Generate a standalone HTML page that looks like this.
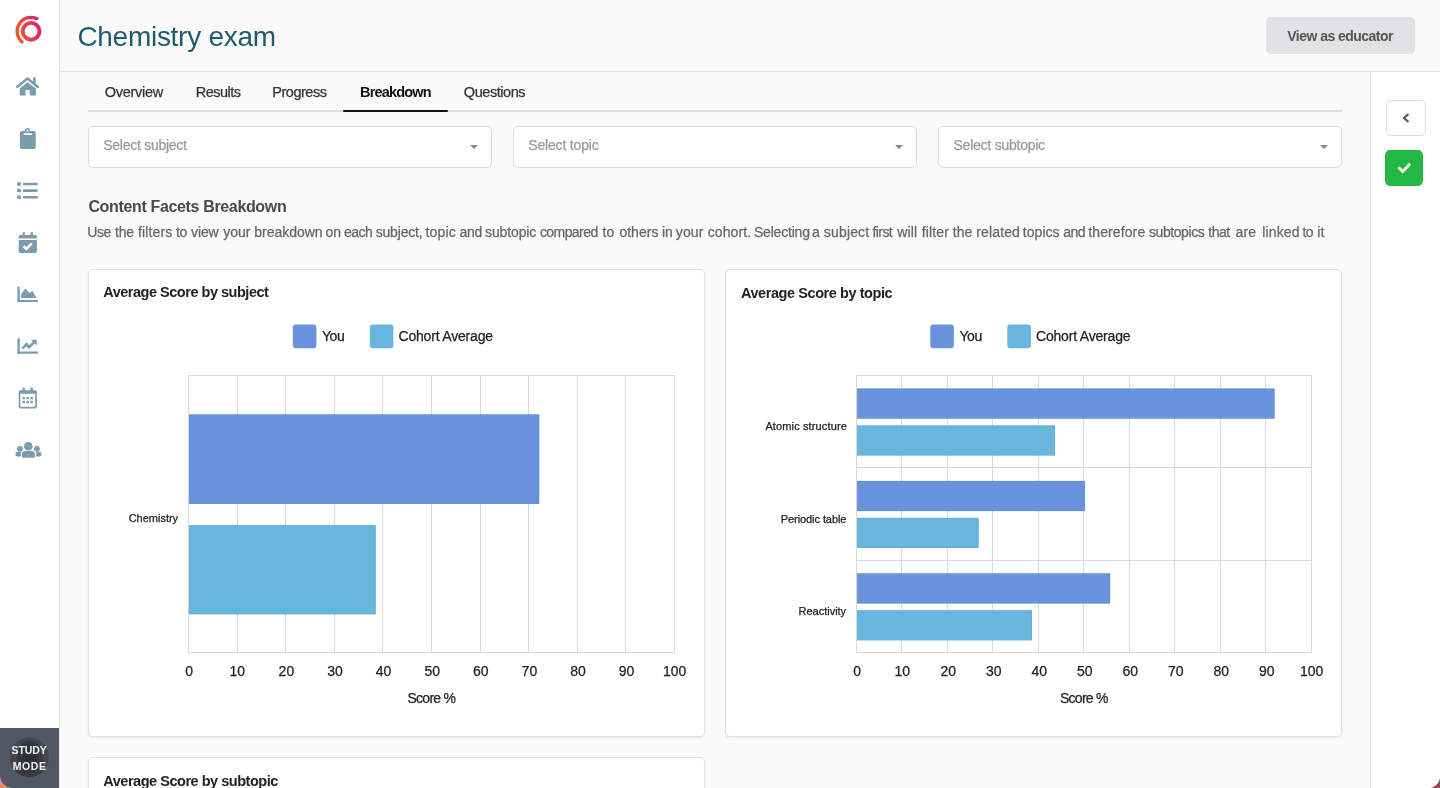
<!DOCTYPE html>
<html><head><meta charset="utf-8"><title>Chemistry exam</title>
<style>
html,body{margin:0;padding:0}
body{width:1440px;height:788px;overflow:hidden;position:relative;font-family:"Liberation Sans",sans-serif;background:linear-gradient(90deg,#e88a6e 0%,#b56a5e 50%,#8e4a4c 100%)}
.app{position:absolute;left:0;top:0;width:1440px;height:788px;overflow:hidden;border-radius:0 0 12px 12px;background:#fafafa}
.side{position:absolute;left:0;top:0;width:59px;height:788px;background:#fff;border-right:1px solid #e6e6e6}
.head{position:absolute;left:60px;top:0;width:1380px;height:71px;background:#fafafa;border-bottom:1px solid #e4e4e4}
.rpanel{position:absolute;left:1370px;top:72px;width:70px;height:716px;background:#fff;border-left:1px solid #e6e6e6}
.btn-edu{position:absolute;left:1266px;top:17px;width:149px;height:37px;background:#e1e2e4;border-radius:5px}
.tabline{position:absolute;left:88px;top:110px;width:1254px;height:2px;background:#dedede}
.tabact{position:absolute;left:343px;top:110px;width:105px;height:2px;background:#111;border-radius:1px}
.sel{position:absolute;top:126px;width:402px;height:40px;background:#fff;border:1px solid #dcdcdc;border-radius:5px}
.caret{position:absolute;top:18px;right:13px;width:0;height:0;border-left:4px solid transparent;border-right:4px solid transparent;border-top:4px solid #888}
.card{position:absolute;width:615px;background:#fff;border:1px solid #e0e0e0;border-radius:5px;box-shadow:0 1px 2px rgba(0,0,0,0.08)}
.t{position:absolute;white-space:nowrap;font-family:"Liberation Sans",sans-serif;-webkit-font-smoothing:antialiased;font-variant-ligatures:none}
.study{position:absolute;left:0;top:728px;width:59px;height:60px;background:#505866}
.study .av{position:absolute;left:10px;top:738px}
.cbtn{position:absolute;left:1386px;top:100px;width:38px;height:34px;background:#fff;border:1px solid #dcdcdc;border-radius:5px}
.gbtn{position:absolute;left:1385px;top:150px;width:38px;height:36px;background:#22b843;border-radius:5px}
svg{position:absolute;left:0;top:0}
</style></head><body>
<div class="app">
 <div class="head"></div>
 <div class="side"></div>
 <div class="rpanel"></div>
 <div class="btn-edu"></div>
 <div class="tabline"></div>
 <div class="tabact"></div>
 <div class="sel" style="left:88px"><div class="caret"></div></div>
 <div class="sel" style="left:513px"><div class="caret"></div></div>
 <div class="sel" style="left:938px"><div class="caret"></div></div>
 <div class="card" style="left:88px;top:269px;height:466px"></div>
 <div class="card" style="left:725px;top:269px;height:466px"></div>
 <div class="card" style="left:88px;top:757px;height:100px"></div>
 <div class="cbtn"></div>
 <div class="gbtn"></div>
 <div class="study"></div>
 <svg width="1440" height="788" viewBox="0 0 1440 788">
  <defs>
   <linearGradient id="lg" x1="16" y1="35" x2="42" y2="28" gradientUnits="userSpaceOnUse">
    <stop offset="0" stop-color="#f25a24"/><stop offset="1" stop-color="#e6186f"/>
   </linearGradient>
   <radialGradient id="av" cx="29" cy="757" r="19.5" gradientUnits="userSpaceOnUse">
    <stop offset="0" stop-color="#2f343d"/><stop offset="0.6" stop-color="#3a3e46"/><stop offset="1" stop-color="#4a4d55"/>
   </radialGradient>
  </defs>
  <!-- logo -->
  <circle cx="31.1" cy="31.3" r="8.4" fill="none" stroke="url(#lg)" stroke-width="3.9"/>
  <path d="M38.1 19.18 A14 14 0 0 0 23.07 42.77" fill="none" stroke="url(#lg)" stroke-width="3.3"/>
  <g fill="#7a9cac" stroke="none">
   <!-- home -->
   <polyline points="17.3,86.7 27.5,78.6 37.8,86.7" fill="none" stroke="#7a9cac" stroke-width="2.5" stroke-linecap="round" stroke-linejoin="round"/>
   <rect x="33.1" y="77.4" width="2.6" height="6.5"/>
   <path d="M27.5 82.2 L35.9 88.6 L35.9 95 Q35.9 95.6 35.3 95.6 L29.8 95.6 L29.8 90 L25.5 90 L25.5 95.6 L20.3 95.6 Q19.7 95.6 19.7 95 L19.7 88.6 Z"/>
   <!-- clipboard -->
   <rect x="19.9" y="130.9" width="15.8" height="18" rx="1.6"/>
   <circle cx="27.5" cy="130.6" r="2.6"/>
   <circle cx="27.5" cy="130.7" r="1.1" fill="#fff"/>
   <rect x="23.7" y="133.3" width="8.2" height="1.8" rx="0.5" fill="#fff"/>
   <!-- list -->
   <rect x="17.1" y="182.2" width="3.8" height="3.5" rx="0.4"/>
   <rect x="17.1" y="188.8" width="3.8" height="3.5" rx="0.4"/>
   <rect x="17.1" y="195.4" width="3.8" height="3.5" rx="0.4"/>
   <rect x="22.7" y="182.7" width="15.3" height="2.6" rx="1.3"/>
   <rect x="22.7" y="189.3" width="15.3" height="2.6" rx="1.3"/>
   <rect x="22.7" y="195.9" width="15.3" height="2.6" rx="1.3"/>
   <!-- calendar check -->
   <rect x="22.7" y="232.2" width="2.1" height="3.5"/>
   <rect x="30.6" y="232.2" width="2.3" height="3.5"/>
   <path d="M18.7 238.5 L18.7 236.6 Q18.7 234.9 20.4 234.9 L35.2 234.9 Q36.9 234.9 36.9 236.6 L36.9 238.5 Z"/>
   <path d="M18.7 240 L36.9 240 L36.9 251.3 Q36.9 253 35.2 253 L20.4 253 Q18.7 253 18.7 251.3 Z"/>
   <polyline points="23.6,246.1 26.3,248.8 31.8,243.3" fill="none" stroke="#fff" stroke-width="2.6"/>
   <!-- area chart -->
   <rect x="17.4" y="286.7" width="2.4" height="15.2" rx="0.6"/>
   <rect x="17.4" y="299.9" width="20.6" height="2.0" rx="0.5"/>
   <polygon points="21.2,297.9 21.2,294 25.3,288.5 29.3,293 32.6,291 36.4,297.9"/>
   <!-- line chart -->
   <rect x="17.4" y="338.2" width="2.4" height="15.5" rx="0.6"/>
   <rect x="17.4" y="351.4" width="20.6" height="2.3" rx="0.5"/>
   <polyline points="22.3,348.6 26.5,344.3 29.0,347.3 34.0,342.3" fill="none" stroke="#7a9cac" stroke-width="2.6" stroke-linejoin="miter"/>
   <polygon points="30.8,339.7 36.7,339.7 36.7,345.5"/>
   <!-- calendar -->
   <rect x="22.7" y="387.6" width="2.1" height="3.5"/>
   <rect x="30.3" y="387.6" width="2.6" height="3.5"/>
   <path fill-rule="evenodd" d="M20.5 390.2 L35.1 390.2 Q36.9 390.2 36.9 392 L36.9 406.7 Q36.9 408.5 35.1 408.5 L20.5 408.5 Q18.7 408.5 18.7 406.7 L18.7 392 Q18.7 390.2 20.5 390.2 Z M20.4 393.7 L20.4 406.7 L35.2 406.7 L35.2 393.7 Z"/>
   <rect x="22.5" y="397" width="2.5" height="2.3" rx="0.4"/>
   <rect x="26.3" y="397" width="2.5" height="2.3" rx="0.4"/>
   <rect x="30.3" y="397" width="2.6" height="2.3" rx="0.4"/>
   <rect x="22.5" y="400.8" width="2.5" height="2.4" rx="0.4"/>
   <rect x="26.3" y="400.8" width="2.5" height="2.4" rx="0.4"/>
   <rect x="30.3" y="400.8" width="2.6" height="2.4" rx="0.4"/>
   <!-- users -->
   <circle cx="28.3" cy="446.2" r="4.3"/>
   <path d="M22 456.9 L22 454.2 Q22 451 25.2 451 L31.7 451 Q34.9 451 34.9 454.2 L34.9 456.9 Q34.9 457.7 34.1 457.7 L22.8 457.7 Q22 457.7 22 456.9 Z"/>
   <circle cx="19.9" cy="448.8" r="2.9"/>
   <circle cx="36.9" cy="448.8" r="2.9"/>
   <path d="M20.9 456.6 L17.6 456.6 Q15.4 456.6 15.4 454.6 L15.4 454 Q15.4 451.8 17.8 451.8 L20.9 451.8 Z"/>
   <path d="M36.2 456.6 L39.3 456.6 Q41.5 456.6 41.5 454.6 L41.5 454 Q41.5 451.8 39.1 451.8 L36.2 451.8 Z"/>
  </g>
  <!-- study avatar -->
  <clipPath id="avc"><circle cx="29.3" cy="757.2" r="19.6"/></clipPath>
  <g clip-path="url(#avc)">
   <rect x="9" y="737" width="41" height="41" fill="#46454a"/>
   <path d="M16 778 L18 752 Q20 740 30 741 Q40 741 42 753 L44 778 Z" fill="#33353c"/>
   <path d="M22 778 L23 755 Q24 746 30 746 Q36 746 37 755 L38 778 Z" fill="#282b33"/>
   <rect x="9" y="769" width="41" height="10" fill="#34343a" opacity="0.8"/>
   <circle cx="29.3" cy="757.2" r="19.6" fill="url(#av)" opacity="0.35"/>
  </g>
  <!-- collapse chevron -->
  <polyline points="1408.5,114 1404,118 1408.5,122" fill="none" stroke="#555" stroke-width="2"/>
  <!-- green check -->
  <polyline points="1398.4,167.2 1402.6,171.4 1410.2,163.8" fill="none" stroke="#fff" stroke-width="2.8"/>
  <rect x="188" y="375" width="1" height="278" fill="#d9d9d9"/>
<rect x="237" y="375" width="1" height="278" fill="#d9d9d9"/>
<rect x="285" y="375" width="1" height="278" fill="#d9d9d9"/>
<rect x="334" y="375" width="1" height="278" fill="#d9d9d9"/>
<rect x="382" y="375" width="1" height="278" fill="#d9d9d9"/>
<rect x="431" y="375" width="1" height="278" fill="#d9d9d9"/>
<rect x="480" y="375" width="1" height="278" fill="#d9d9d9"/>
<rect x="528" y="375" width="1" height="278" fill="#d9d9d9"/>
<rect x="577" y="375" width="1" height="278" fill="#d9d9d9"/>
<rect x="625" y="375" width="1" height="278" fill="#d9d9d9"/>
<rect x="674" y="375" width="1" height="278" fill="#d9d9d9"/>
<rect x="188" y="375" width="487" height="1" fill="#d9d9d9"/>
<rect x="188" y="652" width="487" height="1" fill="#d9d9d9"/>
<rect x="189" y="414.3" width="350.30" height="89.60" fill="#5f8ad6"/>
<rect x="189" y="415.10" width="349.50" height="88.00" fill="#6994dc"/>
<rect x="189" y="525.1" width="186.80" height="89.30" fill="#5eaed8"/>
<rect x="189" y="525.90" width="186.00" height="87.70" fill="#68b6dd"/>
<rect x="856" y="375" width="1" height="278" fill="#d9d9d9"/>
<rect x="901" y="375" width="1" height="278" fill="#d9d9d9"/>
<rect x="947" y="375" width="1" height="278" fill="#d9d9d9"/>
<rect x="992" y="375" width="1" height="278" fill="#d9d9d9"/>
<rect x="1038" y="375" width="1" height="278" fill="#d9d9d9"/>
<rect x="1083" y="375" width="1" height="278" fill="#d9d9d9"/>
<rect x="1129" y="375" width="1" height="278" fill="#d9d9d9"/>
<rect x="1174" y="375" width="1" height="278" fill="#d9d9d9"/>
<rect x="1220" y="375" width="1" height="278" fill="#d9d9d9"/>
<rect x="1265" y="375" width="1" height="278" fill="#d9d9d9"/>
<rect x="1311" y="375" width="1" height="278" fill="#d9d9d9"/>
<rect x="856" y="375" width="456" height="1" fill="#d9d9d9"/>
<rect x="856" y="467" width="456" height="1" fill="#d9d9d9"/>
<rect x="856" y="560" width="456" height="1" fill="#d9d9d9"/>
<rect x="856" y="652" width="456" height="1" fill="#d9d9d9"/>
<rect x="857" y="388.4" width="417.70" height="30.30" fill="#5f8ad6"/>
<rect x="857" y="389.20" width="416.90" height="28.70" fill="#6994dc"/>
<rect x="857" y="425.3" width="198.00" height="30.30" fill="#5eaed8"/>
<rect x="857" y="426.10" width="197.20" height="28.70" fill="#68b6dd"/>
<rect x="857" y="480.9" width="227.90" height="30.20" fill="#5f8ad6"/>
<rect x="857" y="481.70" width="227.10" height="28.60" fill="#6994dc"/>
<rect x="857" y="517.8" width="121.70" height="30.20" fill="#5eaed8"/>
<rect x="857" y="518.60" width="120.90" height="28.60" fill="#68b6dd"/>
<rect x="857" y="573.3" width="253.20" height="30.30" fill="#5f8ad6"/>
<rect x="857" y="574.10" width="252.40" height="28.70" fill="#6994dc"/>
<rect x="857" y="610.2" width="175.00" height="30.20" fill="#5eaed8"/>
<rect x="857" y="611.00" width="174.20" height="28.60" fill="#68b6dd"/>
<rect x="292.8" y="324.6" width="23.6" height="23.6" rx="3" fill="#6994dc"/>
<rect x="369.8" y="324.6" width="23.6" height="23.6" rx="3" fill="#68b6dd"/>
<rect x="930.3" y="324.6" width="23.6" height="23.6" rx="3" fill="#6994dc"/>
<rect x="1007.3" y="324.6" width="23.6" height="23.6" rx="3" fill="#68b6dd"/>
 </svg>
 <div style="position:absolute;left:0;top:0;width:1440px;height:788px;will-change:transform">
<span class="t" style="left:77.40px;top:22.90px;font-size:28px;line-height:28px;font-weight:401;color:#1e5a72;letter-spacing:-0.280px">Chemistry exam</span>
<span class="t" style="left:1287.30px;top:28.90px;font-size:14px;line-height:14px;font-weight:700;color:#555;letter-spacing:-0.539px">View as educator</span>
<span class="t" style="left:104.70px;top:84.70px;font-size:14.5px;line-height:14.5px;font-weight:400;color:#333;letter-spacing:-0.280px;-webkit-text-stroke:0.25px #333">Overview</span>
<span class="t" style="left:195.70px;top:84.70px;font-size:14.5px;line-height:14.5px;font-weight:400;color:#333;letter-spacing:-0.500px;-webkit-text-stroke:0.25px #333">Results</span>
<span class="t" style="left:272.30px;top:84.70px;font-size:14.5px;line-height:14.5px;font-weight:400;color:#333;letter-spacing:-0.482px;-webkit-text-stroke:0.25px #333">Progress</span>
<span class="t" style="left:360.00px;top:84.70px;font-size:14.5px;line-height:14.5px;font-weight:700;color:#111;letter-spacing:-0.812px">Breakdown</span>
<span class="t" style="left:463.80px;top:84.70px;font-size:14.5px;line-height:14.5px;font-weight:400;color:#333;letter-spacing:-0.442px;-webkit-text-stroke:0.25px #333">Questions</span>
<span class="t" style="left:103.30px;top:138.40px;font-size:14px;line-height:14px;font-weight:400;color:#999;letter-spacing:-0.275px;-webkit-text-stroke:0.25px #999">Select subject</span>
<span class="t" style="left:528.30px;top:138.40px;font-size:14px;line-height:14px;font-weight:400;color:#999;letter-spacing:-0.179px;-webkit-text-stroke:0.25px #999">Select topic</span>
<span class="t" style="left:953.50px;top:138.40px;font-size:14px;line-height:14px;font-weight:400;color:#999;letter-spacing:-0.239px;-webkit-text-stroke:0.25px #999">Select subtopic</span>
<span class="t" style="left:88.40px;top:198.80px;font-size:16px;line-height:16px;font-weight:700;color:#4a4a4a;letter-spacing:-0.347px">Content Facets Breakdown</span>
<span class="t" style="left:87.30px;top:224.60px;font-size:14px;line-height:14px;font-weight:400;color:#666;letter-spacing:-0.505px;-webkit-text-stroke:0.25px #666">Use</span>
<span class="t" style="left:115.00px;top:224.60px;font-size:14px;line-height:14px;font-weight:400;color:#666;letter-spacing:-0.188px;-webkit-text-stroke:0.25px #666">the</span>
<span class="t" style="left:138.03px;top:224.60px;font-size:14px;line-height:14px;font-weight:400;color:#666;letter-spacing:0.150px;-webkit-text-stroke:0.25px #666">filters</span>
<span class="t" style="left:176.10px;top:224.60px;font-size:14px;line-height:14px;font-weight:400;color:#666;letter-spacing:-0.590px;-webkit-text-stroke:0.25px #666">to</span>
<span class="t" style="left:191.00px;top:224.60px;font-size:14px;line-height:14px;font-weight:400;color:#666;letter-spacing:-0.099px;-webkit-text-stroke:0.25px #666">view</span>
<span class="t" style="left:223.20px;top:224.60px;font-size:14px;line-height:14px;font-weight:400;color:#666;letter-spacing:-0.024px;-webkit-text-stroke:0.25px #666">your</span>
<span class="t" style="left:254.30px;top:224.60px;font-size:14px;line-height:14px;font-weight:400;color:#666;letter-spacing:-0.025px;-webkit-text-stroke:0.25px #666">breakdown</span>
<span class="t" style="left:325.40px;top:224.60px;font-size:14px;line-height:14px;font-weight:400;color:#666;letter-spacing:0.114px;-webkit-text-stroke:0.25px #666">on</span>
<span class="t" style="left:343.90px;top:224.60px;font-size:14px;line-height:14px;font-weight:400;color:#666;letter-spacing:-0.457px;-webkit-text-stroke:0.25px #666">each</span>
<span class="t" style="left:375.70px;top:224.60px;font-size:14px;line-height:14px;font-weight:400;color:#666;letter-spacing:-0.180px;-webkit-text-stroke:0.25px #666">subject,</span>
<span class="t" style="left:425.51px;top:224.60px;font-size:14px;line-height:14px;font-weight:400;color:#666;letter-spacing:0.150px;-webkit-text-stroke:0.25px #666">topic</span>
<span class="t" style="left:459.40px;top:224.60px;font-size:14px;line-height:14px;font-weight:400;color:#666;letter-spacing:-0.286px;-webkit-text-stroke:0.25px #666">and</span>
<span class="t" style="left:485.00px;top:224.60px;font-size:14px;line-height:14px;font-weight:400;color:#666;letter-spacing:-0.121px;-webkit-text-stroke:0.25px #666">subtopic</span>
<span class="t" style="left:539.90px;top:224.60px;font-size:14px;line-height:14px;font-weight:400;color:#666;letter-spacing:-0.567px;-webkit-text-stroke:0.25px #666">compared</span>
<span class="t" style="left:602.38px;top:224.60px;font-size:14px;line-height:14px;font-weight:400;color:#666;letter-spacing:0.150px;-webkit-text-stroke:0.25px #666">to</span>
<span class="t" style="left:619.40px;top:224.60px;font-size:14px;line-height:14px;font-weight:400;color:#666;letter-spacing:0.018px;-webkit-text-stroke:0.25px #666">others</span>
<span class="t" style="left:662.00px;top:224.60px;font-size:14px;line-height:14px;font-weight:400;color:#666;letter-spacing:-0.210px;-webkit-text-stroke:0.25px #666">in</span>
<span class="t" style="left:675.79px;top:224.60px;font-size:14px;line-height:14px;font-weight:400;color:#666;letter-spacing:0.150px;-webkit-text-stroke:0.25px #666">your</span>
<span class="t" style="left:707.70px;top:224.60px;font-size:14px;line-height:14px;font-weight:400;color:#666;letter-spacing:0.115px;-webkit-text-stroke:0.25px #666">cohort.</span>
<span class="t" style="left:753.90px;top:224.60px;font-size:14px;line-height:14px;font-weight:400;color:#666;letter-spacing:-0.188px;-webkit-text-stroke:0.25px #666">Selecting</span>
<span class="t" style="left:812.00px;top:224.60px;font-size:14px;line-height:14px;font-weight:400;color:#666;letter-spacing:0.000px;-webkit-text-stroke:0.25px #666">a</span>
<span class="t" style="left:823.87px;top:224.60px;font-size:14px;line-height:14px;font-weight:400;color:#666;letter-spacing:0.150px;-webkit-text-stroke:0.25px #666">subject</span>
<span class="t" style="left:872.52px;top:224.60px;font-size:14px;line-height:14px;font-weight:400;color:#666;letter-spacing:-0.600px;-webkit-text-stroke:0.25px #666">first</span>
<span class="t" style="left:897.16px;top:224.60px;font-size:14px;line-height:14px;font-weight:400;color:#666;letter-spacing:0.150px;-webkit-text-stroke:0.25px #666">will</span>
<span class="t" style="left:921.70px;top:224.60px;font-size:14px;line-height:14px;font-weight:400;color:#666;letter-spacing:0.143px;-webkit-text-stroke:0.25px #666">filter</span>
<span class="t" style="left:952.80px;top:224.60px;font-size:14px;line-height:14px;font-weight:400;color:#666;letter-spacing:0.012px;-webkit-text-stroke:0.25px #666">the</span>
<span class="t" style="left:976.19px;top:224.60px;font-size:14px;line-height:14px;font-weight:400;color:#666;letter-spacing:0.150px;-webkit-text-stroke:0.25px #666">related</span>
<span class="t" style="left:1022.80px;top:224.60px;font-size:14px;line-height:14px;font-weight:400;color:#666;letter-spacing:0.046px;-webkit-text-stroke:0.25px #666">topics</span>
<span class="t" style="left:1063.20px;top:224.60px;font-size:14px;line-height:14px;font-weight:400;color:#666;letter-spacing:-0.536px;-webkit-text-stroke:0.25px #666">and</span>
<span class="t" style="left:1088.30px;top:224.60px;font-size:14px;line-height:14px;font-weight:400;color:#666;letter-spacing:0.106px;-webkit-text-stroke:0.25px #666">therefore</span>
<span class="t" style="left:1149.00px;top:224.60px;font-size:14px;line-height:14px;font-weight:400;color:#666;letter-spacing:-0.431px;-webkit-text-stroke:0.25px #666">subtopics</span>
<span class="t" style="left:1208.30px;top:224.60px;font-size:14px;line-height:14px;font-weight:400;color:#666;letter-spacing:-0.487px;-webkit-text-stroke:0.25px #666">that</span>
<span class="t" style="left:1235.48px;top:224.60px;font-size:14px;line-height:14px;font-weight:400;color:#666;letter-spacing:0.150px;-webkit-text-stroke:0.25px #666">are</span>
<span class="t" style="left:1262.28px;top:224.60px;font-size:14px;line-height:14px;font-weight:400;color:#666;letter-spacing:0.150px;-webkit-text-stroke:0.25px #666">linked</span>
<span class="t" style="left:1302.56px;top:224.60px;font-size:14px;line-height:14px;font-weight:400;color:#666;letter-spacing:-0.600px;-webkit-text-stroke:0.25px #666">to</span>
<span class="t" style="left:1317.27px;top:224.60px;font-size:14px;line-height:14px;font-weight:400;color:#666;letter-spacing:0.150px;-webkit-text-stroke:0.25px #666">it</span>
<span class="t" style="left:103.20px;top:285.20px;font-size:14.5px;line-height:14.5px;font-weight:700;color:#222;letter-spacing:-0.480px">Average Score by subject</span>
<span class="t" style="left:740.90px;top:285.50px;font-size:14.5px;line-height:14.5px;font-weight:700;color:#222;letter-spacing:-0.422px">Average Score by topic</span>
<span class="t" style="left:103.30px;top:773.80px;font-size:14.5px;line-height:14.5px;font-weight:700;color:#222;letter-spacing:-0.473px">Average Score by subtopic</span>
<span class="t" style="left:321.90px;top:328.60px;font-size:14px;line-height:14px;font-weight:400;color:#222;letter-spacing:-0.419px;-webkit-text-stroke:0.25px #222">You</span>
<span class="t" style="left:398.50px;top:328.60px;font-size:14px;line-height:14px;font-weight:400;color:#222;letter-spacing:-0.194px;-webkit-text-stroke:0.25px #222">Cohort Average</span>
<span class="t" style="left:959.40px;top:328.60px;font-size:14px;line-height:14px;font-weight:400;color:#222;letter-spacing:-0.419px;-webkit-text-stroke:0.25px #222">You</span>
<span class="t" style="left:1036.00px;top:328.60px;font-size:14px;line-height:14px;font-weight:400;color:#222;letter-spacing:-0.194px;-webkit-text-stroke:0.25px #222">Cohort Average</span>
<span class="t" style="left:185.30px;top:663.50px;font-size:14px;line-height:14px;font-weight:400;color:#222;letter-spacing:0.000px;-webkit-text-stroke:0.25px #222">0</span>
<span class="t" style="left:229.51px;top:663.50px;font-size:14px;line-height:14px;font-weight:400;color:#222;letter-spacing:0.000px;-webkit-text-stroke:0.25px #222">10</span>
<span class="t" style="left:278.61px;top:663.50px;font-size:14px;line-height:14px;font-weight:400;color:#222;letter-spacing:0.000px;-webkit-text-stroke:0.25px #222">20</span>
<span class="t" style="left:327.21px;top:663.50px;font-size:14px;line-height:14px;font-weight:400;color:#222;letter-spacing:0.000px;-webkit-text-stroke:0.25px #222">30</span>
<span class="t" style="left:375.81px;top:663.50px;font-size:14px;line-height:14px;font-weight:400;color:#222;letter-spacing:0.000px;-webkit-text-stroke:0.25px #222">40</span>
<span class="t" style="left:424.41px;top:663.50px;font-size:14px;line-height:14px;font-weight:400;color:#222;letter-spacing:0.000px;-webkit-text-stroke:0.25px #222">50</span>
<span class="t" style="left:473.01px;top:663.50px;font-size:14px;line-height:14px;font-weight:400;color:#222;letter-spacing:0.000px;-webkit-text-stroke:0.25px #222">60</span>
<span class="t" style="left:521.61px;top:663.50px;font-size:14px;line-height:14px;font-weight:400;color:#222;letter-spacing:0.000px;-webkit-text-stroke:0.25px #222">70</span>
<span class="t" style="left:570.21px;top:663.50px;font-size:14px;line-height:14px;font-weight:400;color:#222;letter-spacing:0.000px;-webkit-text-stroke:0.25px #222">80</span>
<span class="t" style="left:618.81px;top:663.50px;font-size:14px;line-height:14px;font-weight:400;color:#222;letter-spacing:0.000px;-webkit-text-stroke:0.25px #222">90</span>
<span class="t" style="left:663.01px;top:663.50px;font-size:14px;line-height:14px;font-weight:400;color:#222;letter-spacing:0.000px;-webkit-text-stroke:0.25px #222">100</span>
<span class="t" style="left:853.30px;top:663.50px;font-size:14px;line-height:14px;font-weight:400;color:#222;letter-spacing:0.000px;-webkit-text-stroke:0.25px #222">0</span>
<span class="t" style="left:894.41px;top:663.50px;font-size:14px;line-height:14px;font-weight:400;color:#222;letter-spacing:0.000px;-webkit-text-stroke:0.25px #222">10</span>
<span class="t" style="left:940.41px;top:663.50px;font-size:14px;line-height:14px;font-weight:400;color:#222;letter-spacing:0.000px;-webkit-text-stroke:0.25px #222">20</span>
<span class="t" style="left:985.91px;top:663.50px;font-size:14px;line-height:14px;font-weight:400;color:#222;letter-spacing:0.000px;-webkit-text-stroke:0.25px #222">30</span>
<span class="t" style="left:1031.41px;top:663.50px;font-size:14px;line-height:14px;font-weight:400;color:#222;letter-spacing:0.000px;-webkit-text-stroke:0.25px #222">40</span>
<span class="t" style="left:1076.91px;top:663.50px;font-size:14px;line-height:14px;font-weight:400;color:#222;letter-spacing:0.000px;-webkit-text-stroke:0.25px #222">50</span>
<span class="t" style="left:1122.41px;top:663.50px;font-size:14px;line-height:14px;font-weight:400;color:#222;letter-spacing:0.000px;-webkit-text-stroke:0.25px #222">60</span>
<span class="t" style="left:1167.91px;top:663.50px;font-size:14px;line-height:14px;font-weight:400;color:#222;letter-spacing:0.000px;-webkit-text-stroke:0.25px #222">70</span>
<span class="t" style="left:1213.41px;top:663.50px;font-size:14px;line-height:14px;font-weight:400;color:#222;letter-spacing:0.000px;-webkit-text-stroke:0.25px #222">80</span>
<span class="t" style="left:1258.91px;top:663.50px;font-size:14px;line-height:14px;font-weight:400;color:#222;letter-spacing:0.000px;-webkit-text-stroke:0.25px #222">90</span>
<span class="t" style="left:1300.01px;top:663.50px;font-size:14px;line-height:14px;font-weight:400;color:#222;letter-spacing:0.000px;-webkit-text-stroke:0.25px #222">100</span>
<span class="t" style="left:407.55px;top:690.50px;font-size:14px;line-height:14px;font-weight:400;color:#222;letter-spacing:-0.760px;-webkit-text-stroke:0.25px #222">Score %</span>
<span class="t" style="left:1060.05px;top:690.50px;font-size:14px;line-height:14px;font-weight:400;color:#222;letter-spacing:-0.760px;-webkit-text-stroke:0.25px #222">Score %</span>
<span class="t" style="left:128.70px;top:513.30px;font-size:11px;line-height:11px;font-weight:400;color:#222;letter-spacing:-0.013px;-webkit-text-stroke:0.25px #222">Chemistry</span>
<span class="t" style="left:765.40px;top:420.80px;font-size:11px;line-height:11px;font-weight:400;color:#222;letter-spacing:0.130px;-webkit-text-stroke:0.25px #222">Atomic structure</span>
<span class="t" style="left:780.80px;top:513.50px;font-size:11px;line-height:11px;font-weight:400;color:#222;letter-spacing:-0.079px;-webkit-text-stroke:0.25px #222">Periodic table</span>
<span class="t" style="left:798.60px;top:605.60px;font-size:11px;line-height:11px;font-weight:400;color:#222;letter-spacing:-0.020px;-webkit-text-stroke:0.25px #222">Reactivity</span>
<span class="t" style="left:11.60px;top:745.30px;font-size:10.5px;line-height:10.5px;font-weight:700;color:#f2f2f2;letter-spacing:-0.096px">STUDY</span>
<span class="t" style="left:12.80px;top:761.00px;font-size:10.5px;line-height:10.5px;font-weight:700;color:#f2f2f2;letter-spacing:0.568px">MODE</span>
 </div>
</div>
</body></html>
